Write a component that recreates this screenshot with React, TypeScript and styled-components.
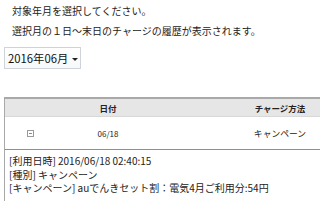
import styled, { createGlobalStyle } from 'styled-components';

const GlobalStyle = createGlobalStyle`
  html, body {
    margin: 0;
    padding: 0;
    background: #ffffff;
    overflow: hidden;
  }
  body {
    font-family: 'Noto Sans CJK JP', 'Liberation Sans', sans-serif;
    color: #222;
  }
`;

const Page = styled.div`
  width: 320px;
  height: 201px;
  overflow: hidden;
  padding: 0 0 0 4px;
  box-sizing: border-box;
`;

const Lead = styled.p`
  margin: 0;
  padding-left: 8px;
  font-size: 10px;
  line-height: 20px;
  white-space: nowrap;
  &:first-child {
    padding-top: 1px;
  }
`;

const Picker = styled.div`
  margin-top: 6px;
  width: 77px;
  height: 22px;
  box-sizing: border-box;
  border: 1px solid #cfd3da;
  background: linear-gradient(#ffffff, #f7f8fa);
  display: flex;
  align-items: center;
  padding: 0 2px 0 3px;
  font-size: 11.3px;
  color: #111;
`;

const PickerText = styled.span`
  flex: 1;
  white-space: nowrap;
`;

const Caret = styled.span`
  width: 0;
  height: 0;
  border-left: 3px solid transparent;
  border-right: 3px solid transparent;
  border-top: 3px solid #222;
  margin-top: 2px;
`;

const Table = styled.div`
  margin-top: 28px;
  width: 360px;
  border-top: 2px solid #a9a9a9;
  border-left: 1px solid #a9a9a9;
`;

const Row = styled.div<{ $head?: boolean }>`
  display: grid;
  grid-template-columns: 47px 112px 76px 80px 1fr;
  align-items: center;
  height: ${p => (p.$head ? '17px' : '32px')};
  background: ${p => (p.$head ? '#e6e6e6' : '#fff')};
  border-bottom: 1px solid ${p => (p.$head ? '#d8d8d8' : '#8e8e8e')};
  font-size: ${p => (p.$head ? '8.5px' : '8px')};
  font-weight: ${p => (p.$head ? 700 : 400)};
  color: #222;
`;

const Cell = styled.div<{ $big?: boolean }>`
  text-align: center;
  white-space: nowrap;
  font-size: ${p => (p.$big ? '8.8px' : 'inherit')};
`;

const Toggle = styled.div`
  justify-self: center;
  margin-left: 4px;
  width: 7px;
  height: 7px;
  box-sizing: border-box;
  border: 1px solid #9a9a9a;
  display: flex;
  align-items: center;
  justify-content: center;
  &::after {
    content: '';
    width: 3px;
    height: 1px;
    background: #8a8a8a;
  }
`;

const Detail = styled.div`
  padding: 4px 0 6px 4px;
  font-size: 10px;
  line-height: 13.5px;
  color: #222;
`;

const Line = styled.div`
  white-space: nowrap;
`;

export default function App() {
  return (
    <>
      <GlobalStyle />
      <Page>
        <Lead>対象年月を選択してください。</Lead>
        <Lead>選択月の１日〜末日のチャージの履歴が表示されます。</Lead>
        <Picker>
          <PickerText>2016年06月</PickerText>
          <Caret />
        </Picker>
        <Table>
          <Row $head>
            <Cell />
            <Cell>日付</Cell>
            <Cell />
            <Cell>チャージ方法</Cell>
            <Cell />
          </Row>
          <Row>
            <Toggle />
            <Cell>06/18</Cell>
            <Cell />
            <Cell $big>キャンペーン</Cell>
            <Cell />
          </Row>
          <Detail>
            <Line>[利用日時] 2016/06/18 02:40:15</Line>
            <Line>[種別] キャンペーン</Line>
            <Line>[キャンペーン] auでんきセット割：電気4月ご利用分:54円</Line>
          </Detail>
        </Table>
      </Page>
    </>
  );
}
